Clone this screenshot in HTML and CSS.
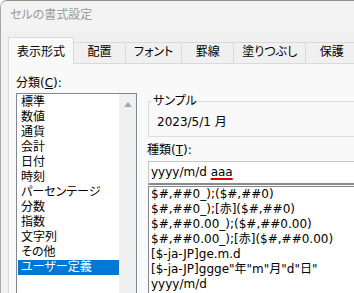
FILE: index.html
```html
<!DOCTYPE html>
<html lang="ja">
<head>
<meta charset="utf-8">
<title>セルの書式設定</title>
<link rel="stylesheet" href="styles.css">
</head>
<body>
<div class="window">
  <div class="titlebar"><span class="title">セルの書式設定</span></div>
  <div class="tabs">
    <div class="tab active">表示形式</div>
    <div class="tab">配置</div>
    <div class="tab">フォント</div>
    <div class="tab">罫線</div>
    <div class="tab">塗りつぶし</div>
    <div class="tab">保護</div>
  </div>
  <div class="pane">
    <div class="left-col">
      <div class="label">分類(<u>C</u>):</div>
      <div class="listbox">
        <ul class="items">
          <li>標準</li>
          <li>数値</li>
          <li>通貨</li>
          <li>会計</li>
          <li>日付</li>
          <li>時刻</li>
          <li>パーセンテージ</li>
          <li>分数</li>
          <li>指数</li>
          <li>文字列</li>
          <li>その他</li>
          <li class="selected">ユーザー定義</li>
        </ul>
        <div class="scrollbar">
          <svg class="arrow" width="8" height="5" viewBox="0 0 8 5"><polygon points="0,5 4,0 8,5" fill="#a6a6a6"/></svg>
        </div>
      </div>
    </div>
    <div class="right-col">
      <fieldset class="group">
        <legend>サンプル</legend>
        <div class="sample-value">2023/5/1 月</div>
      </fieldset>
      <div class="label label-type">種類(<u>T</u>):</div>
      <div class="input">yyyy/m/d <span class="misspelled">aaa</span></div>
      <div class="formats">
        <ul class="items">
          <li>$#,##0_);($#,##0)</li>
          <li>$#,##0_);[赤]($#,##0)</li>
          <li>$#,##0.00_);($#,##0.00)</li>
          <li>$#,##0.00_);[赤]($#,##0.00)</li>
          <li>[$-ja-JP]ge.m.d</li>
          <li>[$-ja-JP]ggge"年"m"月"d"日"</li>
          <li>yyyy/m/d</li>
        </ul>
      </div>
    </div>
  </div>
</div>
</body>
</html>
```
FILE: styles.css
```css
* { box-sizing: border-box; }
html, body { margin: 0; padding: 0; }
body {
  width: 354px;
  height: 293px;
  overflow: hidden;
  background: #ffffff;
  font-family: "DejaVu Sans", "Noto Sans CJK JP", sans-serif;
  font-size: 12px;
  color: #000;
  font-feature-settings: "palt";
}
.window {
  width: 430px;
  height: 293px;
  background: #f0f0f0;
  border-top: 1px solid #8e8e8e;
  border-left: 1px solid #a8a8a8;
  border-top-left-radius: 7px;
  overflow: hidden;
}
.titlebar {
  height: 30px;
  line-height: 28px;
  padding-left: 9px;
  background: #f3f3f3;
}
.title { color: #9a9a9a; }
.tabs {
  height: 32px;
  display: flex;
  align-items: flex-end;
  padding-left: 7px;
  background: #f0f0f0;
}
.tab {
  height: 21px;
  min-width: 53px;
  padding: 0 8px;
  line-height: 18px;
  text-align: center;
  border: 1px solid #dadada;
  border-bottom: 0;
  margin-left: -1px;
  background: #f0f0f0;
  white-space: nowrap;
}
.tab.active {
  margin-left: 0;
  height: 27px;
  padding-top: 5px;
  margin-bottom: -1px;
  background: #f9f9f9;
  position: relative;
  z-index: 1;
}
.pane {
  margin-left: 7px;
  height: 230px;
  background: #f9f9f9;
  border-left: 1px solid #dadada;
  border-top: 1px solid #dadada;
  padding: 12px 0 0 7px;
  display: flex;
  gap: 11px;
}
.left-col { width: 121px; flex: none; }
.right-col { width: 270px; flex: none; }
.label { line-height: 15px; }
.listbox {
  margin-top: 2px;
  height: 230px;
  border: 1px solid #828790;
  background: #fff;
  display: flex;
}
.items {
  list-style: none;
  margin: 0;
  padding: 0;
}
.listbox .items {
  flex: 1;
  padding: 1px 0 0 1px;
}
.items li {
  line-height: 15px;
  padding-left: 3px;
  white-space: nowrap;
}
.items li.selected {
  background: #0078d7;
  color: #fff;
}
.scrollbar {
  width: 17px;
  flex: none;
  background: #f0f0f0;
  display: flex;
  justify-content: center;
  align-items: flex-start;
}
.arrow { margin-top: 8px; display: block; }
.group {
  margin: 18px 0 0 0;
  padding: 6px 3px 6px 3px;
  border: 1px solid #dcdcdc;
  min-width: 0;
}
.group legend {
  padding: 0 1px;
  line-height: 15px;
}
.sample-value {
  margin-left: 5px;
  line-height: 15px;
}
.label-type { margin-top: 6px; margin-left: -1px; }
.input {
  margin-top: 3px;
  height: 24px;
  background: #fff;
  border: 1px solid #c6c6c6;
  border-bottom: 2px solid #8a8a8a;
  padding-left: 2px;
  line-height: 21px;
  white-space: nowrap;
}
.misspelled {
  text-decoration: underline;
  text-decoration-color: #e00000;
  text-decoration-thickness: 2px;
  text-underline-offset: 2px;
}
.formats {
  margin-top: 1px;
  height: 120px;
  border: 1px solid #828790;
  background: #fff;
}
.formats .items li { padding-left: 2px; }
```
